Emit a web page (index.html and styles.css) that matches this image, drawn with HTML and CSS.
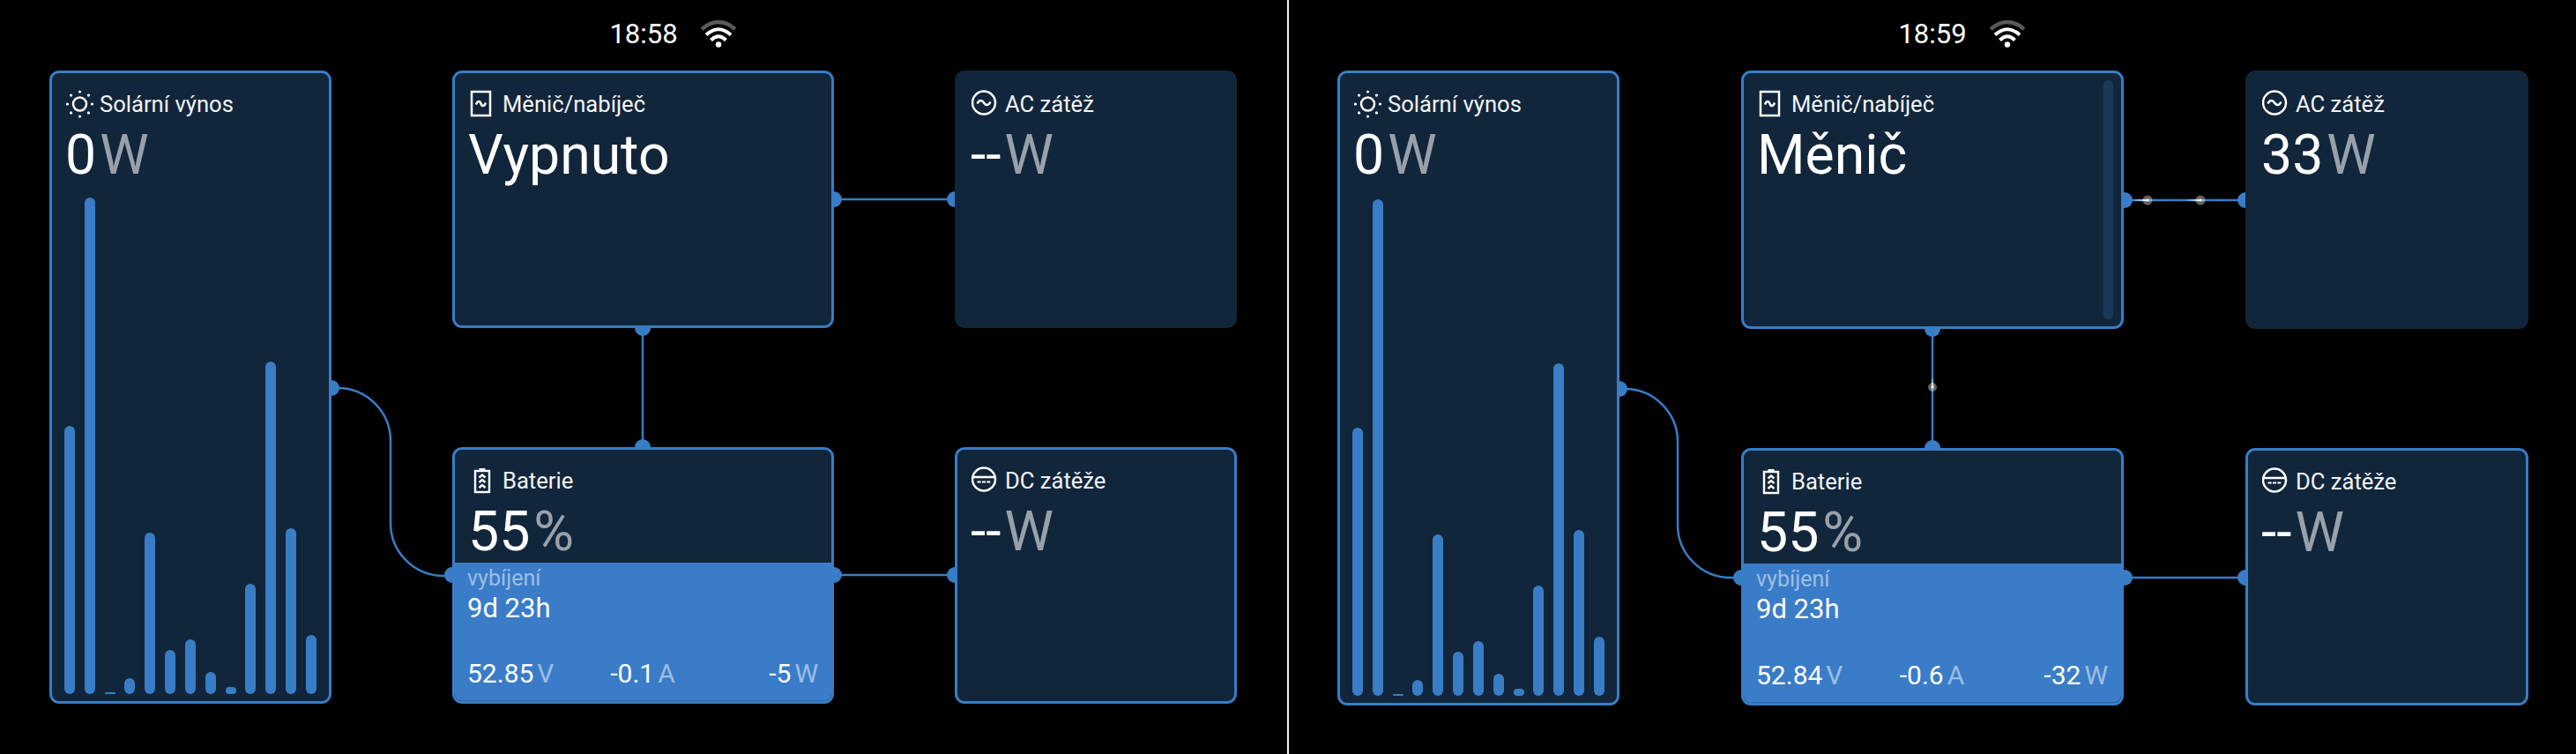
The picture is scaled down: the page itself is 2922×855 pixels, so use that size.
FILE: index.html
```html
<!DOCTYPE html>
<html lang="cs">
<head>
<meta charset="utf-8">
<title>Přehled</title>
<link rel="stylesheet" href="styles.css">
</head>
<body>
<main class="page">
  <section class="screen screen-a">
    <svg class="wires" viewBox="0 0 1460 855" aria-hidden="true">
      <path class="wire" d="M376 440H383A60 60 0 0 1 443 500V593A60 60 0 0 0 503 653H513"/>
      <path class="wire" d="M946 226H1083"/>
      <path class="wire" d="M729 372V507"/>
      <path class="wire" d="M946 652H1083"/>
      <circle class="node" cx="376" cy="440" r="9"/>
      <circle class="node" cx="513" cy="652" r="9"/>
      <circle class="node" cx="946" cy="226" r="9"/>
      <circle class="node" cx="1083" cy="226" r="9"/>
      <circle class="node" cx="729" cy="372" r="9"/>
      <circle class="node" cx="729" cy="507" r="9"/>
      <circle class="node" cx="946" cy="652" r="9"/>
      <circle class="node" cx="1083" cy="652" r="9"/>
    </svg>
    <header class="status">
      <span class="clock">18:58</span>
      <svg class="wifi" viewBox="0 0 40 34" aria-hidden="true">
        <path class="wifi-far" d="M1 12Q20 -4 39 12"/>
        <path class="wifi-on" d="M6 18.500Q20 6 34 18.500"/>
        <path class="wifi-on" d="M11.500 24.500Q20 16 28.500 24.500"/>
        <circle class="wifi-dot" cx="20" cy="29.500" r="3.200"/>
      </svg>
    </header>
    <div class="flow">
      <article class="card card-solar">
        <div class="card-top">
          <div class="head">
            <svg class="icon" viewBox="0 0 32 32" aria-hidden="true">
              <circle class="ln" cx="15.500" cy="16" r="7.500" stroke-width="2.500"/>
              <g class="pt"><circle cx="15.500" cy="2" r="1.600"/><circle cx="15.500" cy="30" r="1.600"/><circle cx="1.500" cy="16" r="1.600"/><circle cx="29.500" cy="16" r="1.600"/><circle cx="5.600" cy="6.100" r="1.600"/><circle cx="25.400" cy="6.100" r="1.600"/><circle cx="5.600" cy="25.900" r="1.600"/><circle cx="25.400" cy="25.900" r="1.600"/></g>
            </svg>
            <span class="title">Solární výnos</span>
          </div>
          <div class="value">0<span class="unit">W</span></div>
        </div>
        <div class="bars">
          <i class="bar" style="height:304px"></i><i class="bar" style="height:563px"></i><i class="bar" style="height:2px"></i><i class="bar" style="height:18px"></i><i class="bar" style="height:183px"></i><i class="bar" style="height:50px"></i><i class="bar" style="height:62px"></i><i class="bar" style="height:25px"></i><i class="bar" style="height:8px"></i><i class="bar" style="height:125px"></i><i class="bar" style="height:377px"></i><i class="bar" style="height:188px"></i><i class="bar" style="height:67px"></i>
        </div>
      </article>
      <article class="card">
        <div class="card-top">
          <div class="head">
            <svg class="icon" viewBox="0 0 32 32" aria-hidden="true">
              <rect class="ln" x="3" y="2" width="21" height="27" stroke-width="2.500"/>
              <path class="ln" d="M8 16.500C10 11.500 12.500 12.500 13.500 15.500S17 19.500 19 14.500" stroke-width="2.500"/>
            </svg>
            <span class="title">Měnič/nabíječ</span>
          </div>
          <div class="value">Vypnuto</div>
        </div>
      </article>
      <article class="card card-plain">
        <div class="card-top">
          <div class="head">
            <svg class="icon" viewBox="0 0 32 32" aria-hidden="true">
              <circle class="ln" cx="14" cy="14.500" r="13" stroke-width="2.500"/>
              <path class="ln" d="M6.500 15.500C9 10.500 12 11.500 14 14.500S19 18.500 21.500 13.500" stroke-width="2.500"/>
            </svg>
            <span class="title">AC zátěž</span>
          </div>
          <div class="value">--<span class="unit">W</span></div>
        </div>
      </article>
      <article class="card card-battery">
        <div class="card-top">
          <div class="head">
            <svg class="icon" viewBox="0 0 32 32" aria-hidden="true">
              <rect class="ln" x="7" y="5" width="16" height="24" stroke-width="2.400"/>
              <path class="fl" d="M11.500 2h7v3h-7z"/>
              <path class="ln" d="M11.500 12.500L15 9.500L18.500 12.500M11.500 18L15 15L18.500 18M11.500 24L15 21L18.500 24" stroke-width="2.400"/>
            </svg>
            <span class="title">Baterie</span>
          </div>
          <div class="value">55<span class="unit">%</span></div>
        </div>
        <div class="fill">
          <div class="fill-mode">vybíjení</div>
          <div class="fill-time">9d 23h</div>
          <div class="readings">
            <span class="reading">52.85<span class="reading-unit">V</span></span>
            <span class="reading reading-mid">-0.1<span class="reading-unit">A</span></span>
            <span class="reading reading-end">-5<span class="reading-unit">W</span></span>
          </div>
        </div>
      </article>
      <article class="card">
        <div class="card-top">
          <div class="head">
            <svg class="icon" viewBox="0 0 32 32" aria-hidden="true">
              <circle class="ln" cx="14" cy="14.500" r="13" stroke-width="2.500"/>
              <path class="ln" d="M2 12H26" stroke-width="2.500"/>
              <path class="ln" d="M6.500 17.500H10.700M12 17.500H16M17.300 17.500H21.300" stroke-width="2.200"/>
            </svg>
            <span class="title">DC zátěže</span>
          </div>
          <div class="value">--<span class="unit">W</span></div>
        </div>
      </article>
    </div>
  </section>

  <div class="divider"></div>

  <section class="screen screen-b">
    <svg class="wires" viewBox="0 0 1460 855" aria-hidden="true">
      <defs>
        <linearGradient id="trail"><stop offset="0" stop-color="#fff" stop-opacity="0"/><stop offset="1" stop-color="#fff"/></linearGradient>
        <linearGradient id="trail-v" x1="0" y1="0" x2="0" y2="1"><stop offset="0" stop-color="#fff" stop-opacity="0"/><stop offset="1" stop-color="#fff"/></linearGradient>
      </defs>
      <path class="wire" d="M375 441H381A60 60 0 0 1 441 501V595A60 60 0 0 0 501 655H513"/>
      <path class="wire" d="M948 227H1085"/>
      <path class="wire" d="M730 373V508"/>
      <path class="wire" d="M948 655H1085"/>
      <circle class="node" cx="375" cy="441" r="9"/>
      <circle class="node" cx="513" cy="655" r="9"/>
      <circle class="node" cx="948" cy="227" r="9"/>
      <circle class="node" cx="1085" cy="227" r="9"/>
      <circle class="node" cx="730" cy="373" r="9"/>
      <circle class="node" cx="730" cy="508" r="9"/>
      <circle class="node" cx="948" cy="655" r="9"/>
      <circle class="node" cx="1085" cy="655" r="9"/>
      <rect x="957" y="226" width="18" height="2" fill="url(#trail)"/>
      <rect x="1017" y="226" width="18" height="2" fill="url(#trail)"/>
      <rect x="729" y="428" width="2" height="12" fill="url(#trail-v)"/>
      <g><circle class="spark-halo" cx="974" cy="227" r="5.500"/><circle class="spark-core" cx="974" cy="227" r="1.600"/></g>
      <g><circle class="spark-halo" cx="1034" cy="227" r="5.500"/><circle class="spark-core" cx="1034" cy="227" r="1.600"/></g>
      <g><circle class="spark-halo" cx="730" cy="439" r="5"/><circle class="spark-core" cx="730" cy="439" r="1.600"/></g>
    </svg>
    <header class="status">
      <span class="clock">18:59</span>
      <svg class="wifi" viewBox="0 0 40 34" aria-hidden="true">
        <path class="wifi-far" d="M1 12Q20 -4 39 12"/>
        <path class="wifi-on" d="M6 18.500Q20 6 34 18.500"/>
        <path class="wifi-on" d="M11.500 24.500Q20 16 28.500 24.500"/>
        <circle class="wifi-dot" cx="20" cy="29.500" r="3.200"/>
      </svg>
    </header>
    <div class="flow">
      <article class="card card-solar">
        <div class="card-top">
          <div class="head">
            <svg class="icon" viewBox="0 0 32 32" aria-hidden="true">
              <circle class="ln" cx="15.500" cy="16" r="7.500" stroke-width="2.500"/>
              <g class="pt"><circle cx="15.500" cy="2" r="1.600"/><circle cx="15.500" cy="30" r="1.600"/><circle cx="1.500" cy="16" r="1.600"/><circle cx="29.500" cy="16" r="1.600"/><circle cx="5.600" cy="6.100" r="1.600"/><circle cx="25.400" cy="6.100" r="1.600"/><circle cx="5.600" cy="25.900" r="1.600"/><circle cx="25.400" cy="25.900" r="1.600"/></g>
            </svg>
            <span class="title">Solární výnos</span>
          </div>
          <div class="value">0<span class="unit">W</span></div>
        </div>
        <div class="bars">
          <i class="bar" style="height:304px"></i><i class="bar" style="height:563px"></i><i class="bar" style="height:2px"></i><i class="bar" style="height:18px"></i><i class="bar" style="height:183px"></i><i class="bar" style="height:50px"></i><i class="bar" style="height:62px"></i><i class="bar" style="height:25px"></i><i class="bar" style="height:8px"></i><i class="bar" style="height:125px"></i><i class="bar" style="height:377px"></i><i class="bar" style="height:188px"></i><i class="bar" style="height:67px"></i>
        </div>
      </article>
      <article class="card card-scroll">
        <div class="card-top">
          <div class="head">
            <svg class="icon" viewBox="0 0 32 32" aria-hidden="true">
              <rect class="ln" x="3" y="2" width="21" height="27" stroke-width="2.500"/>
              <path class="ln" d="M8 16.500C10 11.500 12.500 12.500 13.500 15.500S17 19.500 19 14.500" stroke-width="2.500"/>
            </svg>
            <span class="title">Měnič/nabíječ</span>
          </div>
          <div class="value">Měnič</div>
        </div>
        <span class="scrollbar"></span>
      </article>
      <article class="card card-plain">
        <div class="card-top">
          <div class="head">
            <svg class="icon" viewBox="0 0 32 32" aria-hidden="true">
              <circle class="ln" cx="14" cy="14.500" r="13" stroke-width="2.500"/>
              <path class="ln" d="M6.500 15.500C9 10.500 12 11.500 14 14.500S19 18.500 21.500 13.500" stroke-width="2.500"/>
            </svg>
            <span class="title">AC zátěž</span>
          </div>
          <div class="value">33<span class="unit">W</span></div>
        </div>
      </article>
      <article class="card card-battery">
        <div class="card-top">
          <div class="head">
            <svg class="icon" viewBox="0 0 32 32" aria-hidden="true">
              <rect class="ln" x="7" y="5" width="16" height="24" stroke-width="2.400"/>
              <path class="fl" d="M11.500 2h7v3h-7z"/>
              <path class="ln" d="M11.500 12.500L15 9.500L18.500 12.500M11.500 18L15 15L18.500 18M11.500 24L15 21L18.500 24" stroke-width="2.400"/>
            </svg>
            <span class="title">Baterie</span>
          </div>
          <div class="value">55<span class="unit">%</span></div>
        </div>
        <div class="fill">
          <div class="fill-mode">vybíjení</div>
          <div class="fill-time">9d 23h</div>
          <div class="readings">
            <span class="reading">52.84<span class="reading-unit">V</span></span>
            <span class="reading reading-mid">-0.6<span class="reading-unit">A</span></span>
            <span class="reading reading-end">-32<span class="reading-unit">W</span></span>
          </div>
        </div>
      </article>
      <article class="card">
        <div class="card-top">
          <div class="head">
            <svg class="icon" viewBox="0 0 32 32" aria-hidden="true">
              <circle class="ln" cx="14" cy="14.500" r="13" stroke-width="2.500"/>
              <path class="ln" d="M2 12H26" stroke-width="2.500"/>
              <path class="ln" d="M6.500 17.500H10.700M12 17.500H16M17.300 17.500H21.300" stroke-width="2.200"/>
            </svg>
            <span class="title">DC zátěže</span>
          </div>
          <div class="value">--<span class="unit">W</span></div>
        </div>
      </article>
    </div>
  </section>
</main>
</body>
</html>
```

FILE: styles.css
```css
* { box-sizing: border-box; }
html, body { margin: 0; height: 100%; background: #000; }
body { font-family: Roboto, "Noto Sans", sans-serif; color: #fff; overflow: hidden; }

.page { display: flex; width: 2922px; height: 855px; }
.divider { flex: 0 0 2px; background: #f4f4f4; }

.screen { position: relative; flex: 0 0 1460px; height: 855px; padding: 0 0 0 56px; }
.screen-b { padding-left: 55px; }

.wires { position: absolute; inset: 0; width: 1460px; height: 855px; }
.wire { fill: none; stroke: #387dc5; stroke-width: 2.500; }
.node { fill: #387dc5; }
.spark-halo { fill: #fff; opacity: .38; }
.spark-core { fill: #fff; }

.status { position: relative; display: grid; grid-template-columns: 1fr auto 1fr; align-items: center; width: 1348px; height: 80px; padding-bottom: 2px; }
.screen-b .status { width: 1350px; }
.clock { grid-column: 2; font-size: 31px; line-height: 36px; }
.wifi { grid-column: 3; width: 40px; height: 34px; margin-left: 26px; margin-top: -2px; }
.wifi-far { fill: none; stroke: #5a5a5a; stroke-width: 4.500; }
.wifi-on { fill: none; stroke: #fff; stroke-width: 4; }
.wifi-dot { fill: #fff; }

.flow { position: relative; display: grid; grid-template-columns: 320px 433px 320px; column-gap: 137px; grid-template-rows: 292px 291px; row-gap: 135px; }
.screen-b .flow { grid-template-columns: 320px 434px 321px; column-gap: 138px; grid-template-rows: 293px 292px; }

.card { position: relative; display: flex; flex-direction: column; overflow: hidden; background: #11263b; border: 3px solid #387dc5; border-radius: 11px; }
.card-plain { border-color: #11263b; }
.card-solar { grid-row: 1 / span 2; }
.card-top { padding: 19px 15px 0 16px; }

.head { display: flex; align-items: center; gap: 6px; height: 32px; }
.icon { flex: 0 0 32px; width: 32px; height: 32px; }
.ln { fill: none; stroke: #fff; }
.fl, .pt { fill: #fff; }
.title { font-size: 25.600px; line-height: 32px; color: #f2f4f6; }

.value { margin: 10px 0 0 -1px; font-size: 62.500px; line-height: 64px; white-space: nowrap; }
.unit { margin-left: 4px; color: #98a1ab; }

.bars { flex: 1; display: flex; align-items: flex-end; justify-content: space-between; padding: 0 14px 8px; }
.bar { display: block; width: 12px; background: #387dc5; border-radius: 6px; }

.fill { flex: 1; display: flex; flex-direction: column; margin-top: 3px; padding: 3px 15px 12px 14px; background: #3a7cc8; border-bottom: 1px solid #2f6aad; }
.fill-mode { font-size: 25px; line-height: 30px; color: rgba(255, 255, 255, .5); }
.fill-time { font-size: 31px; line-height: 38px; }
.readings { display: grid; grid-template-columns: 1fr 1fr 1fr; margin-top: auto; font-size: 30px; line-height: 36px; }
.reading-mid { text-align: center; }
.reading-end { text-align: right; }
.reading-unit { margin-left: 4px; color: rgba(255, 255, 255, .5); }

.scrollbar { position: absolute; top: 8px; bottom: 8px; right: 9px; width: 11px; background: #1a3859; border-radius: 5px; }
```
